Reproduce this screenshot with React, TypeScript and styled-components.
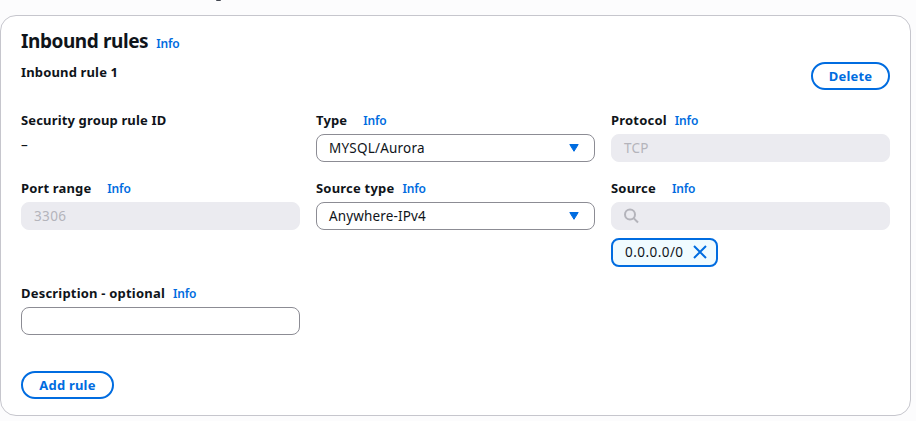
import React from "react";
import styled, { createGlobalStyle } from "styled-components";

const GlobalStyle = createGlobalStyle`
  *, *::before, *::after { box-sizing: border-box; }
  body {
    margin: 0;
    background: #fcfcfd;
    color: #0f141a;
    font-family: "Noto Sans", "Open Sans", sans-serif;
    font-size: 14px;
    line-height: 20px;
  }
`;

const Page = styled.main`
  width: 916px;
  height: 421px;
  overflow: hidden;
`;

const Above = styled.div`
  height: 15px;
  padding-left: 216px;
`;

const Descender = styled.div`
  width: 5px;
  height: 1px;
  border-radius: 0 0 2px 2px;
  background: #424650;
`;

const Card = styled.section`
  width: 911px;
  height: 401px;
  padding: 10px 20px 16px;
  display: flex;
  flex-direction: column;
  background: #fff;
  border: 1px solid #c6c6cd;
  border-radius: 16px;
`;

const CardHeader = styled.header`
  height: 36px;
  display: flex;
  align-items: flex-start;
  gap: 8px;
`;

const Title = styled.h2`
  margin: 0;
  font-size: 19px;
  font-weight: 700;
  line-height: 30px;
  white-space: nowrap;
  letter-spacing: -0.42px;
`;

const Info = styled.a<{ $top?: number }>`
  font-size: 12px;
  font-weight: 600;
  line-height: 20px;
  color: #006ce0;
  white-space: nowrap;
  margin-top: ${(p) => p.$top ?? 1}px;
  letter-spacing: -0.15px;
`;

const RuleBar = styled.div`
  height: 48px;
  display: flex;
  justify-content: space-between;
  align-items: flex-start;
`;

const Label = styled.span<{ $track?: number }>`
  font-size: 13px;
  font-weight: 700;
  white-space: nowrap;
  letter-spacing: ${(p) => p.$track ?? 0.15}px;
`;

const Button = styled.button<{ $width: number }>`
  width: ${(p) => p.$width}px;
  height: 28px;
  padding: 0;
  border: 2px solid #006ce0;
  border-radius: 14px;
  background: #fff;
  color: #006ce0;
  font: 700 13px/20px "Noto Sans", "Open Sans", sans-serif;
  letter-spacing: 0.2px;
`;

const Grid = styled.div`
  display: grid;
  grid-template-columns: repeat(3, 279px);
  gap: 16px;
`;

const FieldBox = styled.div`
  display: flex;
  flex-direction: column;
  align-items: flex-start;
`;

const LabelRow = styled.div<{ $gap: number }>`
  height: 24px;
  display: flex;
  gap: ${(p) => p.$gap}px;
`;

const Control = styled.div<{ $disabled?: boolean }>`
  width: 279px;
  height: 28px;
  padding: 0 14px 0 12px;
  display: flex;
  align-items: center;
  justify-content: space-between;
  border: 1px solid ${(p) => (p.$disabled ? "#ebebf0" : "#8c8c94")};
  border-radius: 8px;
  background: ${(p) => (p.$disabled ? "#ebebf0" : "#fff")};
  color: ${(p) => (p.$disabled ? "#b4b4bb" : "#0f141a")};
`;

const Value = styled.span<{ $track?: number }>`
  font-size: 13.5px;
  white-space: nowrap;
  letter-spacing: ${(p) => p.$track ?? 0.2}px;
`;

const EmptyValue = styled(Value)`
  padding-top: 1px;
`;

const Token = styled.div`
  width: 107px;
  height: 29px;
  margin-top: 8px;
  padding: 0 9px 1px 12px;
  display: flex;
  align-items: center;
  justify-content: space-between;
  border: 2px solid #006ce0;
  border-radius: 8px;
  background: #f0fbff;
`;

const Footer = styled.footer`
  margin-top: auto;
  height: 28px;
`;

const Caret = () => (
  <svg width="11" height="8" viewBox="0 0 11 8">
    <path d="M.8.5h8.4L5 7.3z" fill="#006ce0" stroke="#006ce0" strokeLinejoin="round" />
  </svg>
);

const SearchIcon = () => (
  <svg width="16" height="16" viewBox="0 0 16 16" fill="none" stroke="#b4b4bb" strokeWidth="2">
    <circle cx="6" cy="6.5" r="5" />
    <path d="M9.6 10.1 14 14.5" />
  </svg>
);

const CloseIcon = () => (
  <svg width="14" height="14" viewBox="0 0 14 14" fill="none" stroke="#006ce0" strokeWidth="2">
    <path d="M1 1l12 12M13 1 1 13" />
  </svg>
);

type FieldProps = { label: string; gap?: number; track?: number; children?: React.ReactNode };

const Field = ({ label, gap = 8, track, children }: FieldProps) => (
  <FieldBox>
    <LabelRow $gap={gap}>
      <Label $track={track}>{label}</Label>
      <Info>Info</Info>
    </LabelRow>
    {children}
  </FieldBox>
);

export default function App() {
  return (
    <>
      <GlobalStyle />
      <Page>
        <Above>
          <Descender />
        </Above>
        <Card>
          <CardHeader>
            <Title>Inbound rules</Title>
            <Info $top={8}>Info</Info>
          </CardHeader>
          <RuleBar>
            <Label>Inbound rule 1</Label>
            <Button $width={79}>Delete</Button>
          </RuleBar>
          <Grid>
            <FieldBox>
              <LabelRow $gap={8}>
                <Label>Security group rule ID</Label>
              </LabelRow>
              <EmptyValue>–</EmptyValue>
            </FieldBox>
            <Field label="Type" gap={16}>
              <Control>
                <Value>MYSQL/Aurora</Value>
                <Caret />
              </Control>
            </Field>
            <Field label="Protocol" track={0.2}>
              <Control $disabled>
                <Value>TCP</Value>
              </Control>
            </Field>
            <Field label="Port range" gap={16}>
              <Control $disabled>
                <Value $track={0.4}>3306</Value>
              </Control>
            </Field>
            <Field label="Source type" track={0.2}>
              <Control>
                <Value $track={0.15}>Anywhere-IPv4</Value>
                <Caret />
              </Control>
            </Field>
            <Field label="Source" gap={16} track={0.2}>
              <Control $disabled>
                <SearchIcon />
              </Control>
              <Token>
                <Value $track={0.45}>0.0.0.0/0</Value>
                <CloseIcon />
              </Token>
            </Field>
            <Field label="Description - optional" track={0.2}>
              <Control />
            </Field>
          </Grid>
          <Footer>
            <Button $width={93}>Add rule</Button>
          </Footer>
        </Card>
      </Page>
    </>
  );
}
